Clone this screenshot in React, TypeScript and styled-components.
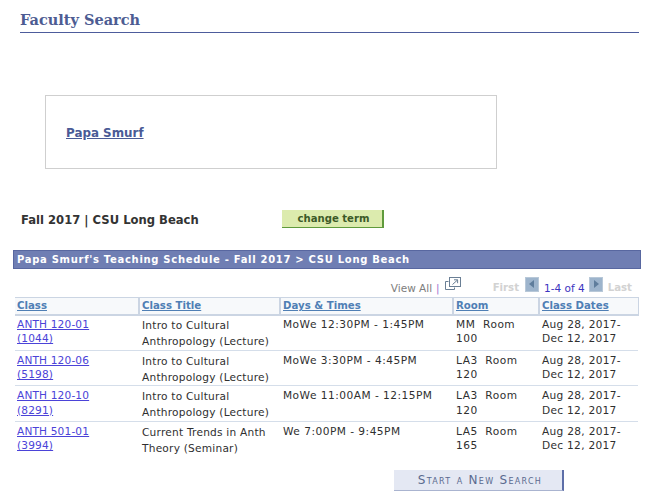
import React from "react";
import styled, { createGlobalStyle } from "styled-components";

const GlobalStyle = createGlobalStyle`
  html, body {
    margin: 0;
    padding: 0;
    background: #fff;
  }
  body {
    font-family: "DejaVu Sans", Verdana, sans-serif;
    font-size: 11px;
    color: #2f2f2f;
  }
`;

const Page = styled.div`
  width: 659px;
  height: 496px;
  overflow: hidden;
  padding-top: 12px;
  box-sizing: border-box;
`;

const Title = styled.h1`
  margin: 0 20px 0 20px;
  height: 20px;
  border-bottom: 1px solid #4d5c9c;
  font: bold 14.5px/15px "DejaVu Serif", "Liberation Serif", serif;
  color: #4d5c92;
`;

const NameBox = styled.div`
  margin: 62px 0 0 45px;
  width: 452px;
  height: 74px;
  box-sizing: border-box;
  border: 1px solid #cfcfcf;
  display: flex;
  align-items: center;
  padding: 1px 0 0 20px;
`;

const NameLink = styled.a`
  font-size: 11.9px;
  font-weight: bold;
  color: #4a5a96;
  text-decoration: underline;
`;

const TermRow = styled.div`
  margin: 41px 0 0 21px;
  height: 18px;
  display: flex;
  align-items: center;
`;

const TermLabel = styled.div`
  width: 261px;
  padding-top: 2px;
  font-size: 11.6px;
  font-weight: bold;
  color: #333;
`;

const TermButton = styled.button`
  width: 102px;
  height: 18px;
  padding: 0 0 0 3px;
  background: #dcebae;
  border: 0;
  border-right: 2px solid #5f9a3c;
  border-bottom: 1px solid #5f9a3c;
  font: bold 10.1px "DejaVu Sans", sans-serif;
  color: #3c5a28;
`;

const Banner = styled.div`
  margin: 22px 18px 0 13px;
  height: 19px;
  box-sizing: border-box;
  background: #6f7eb3;
  border: 1px solid #5867a0;
  padding-left: 3px;
  color: #fff;
  font-size: 10px;
  font-weight: bold;
  letter-spacing: 0.7px;
  line-height: 17px;
  white-space: nowrap;
`;

const NavRow = styled.div`
  margin: 6px 27px 0 0;
  height: 22px;
  display: flex;
  justify-content: flex-end;
  align-items: center;
  font-size: 10.5px;
`;

const NavText = styled.span<{ $faded?: boolean; $blue?: boolean }>`
  color: ${(p) => (p.$blue ? "#3a35c0" : p.$faded ? "#d2d2d2" : "#7d7d7d")};
  font-weight: ${(p) => (p.$faded ? "bold" : "normal")};
  font-size: ${(p) => (p.$faded ? "10.2px" : "10.5px")};
  margin-top: 3px;
`;

const Divider = styled.span`
  color: #a070d0;
  margin: 3px 5px 0 4px;
`;

const ArrowBox = styled.span<{ $left: number }>`
  width: 14px;
  height: 15px;
  background: #9db4cc;
  border: 1px solid #b8c8d8;
  box-sizing: border-box;
  display: flex;
  align-items: center;
  justify-content: center;
  margin: -4px 5px 0 ${(p) => p.$left}px;
`;

const PopupIcon = styled.svg`
  width: 16px;
  height: 14px;
  margin: -4px 32px 0 0;
`;

const Table = styled.table`
  margin-left: 15px;
  width: 623px;
  table-layout: fixed;
  border-collapse: collapse;
`;

const HeadCell = styled.th`
  height: 17px;
  padding: 0 0 0 2px;
  box-sizing: border-box;
  background: #f7f9fb;
  border-top: 1px solid #cbd5e3;
  border-bottom: 2px solid #cbd5e3;
  border-right: 2px solid #cbd5e3;
  text-align: left;
  font-size: 10.2px;
  font-weight: bold;
  &:last-child {
    border-right: 1px solid #cbd5e3;
  }
`;

const HeadLink = styled.a`
  color: #4f7fb5;
  text-decoration: underline;
`;

const Row = styled.tr`
  &:not(:last-child) td {
    border-bottom: 1px solid #d5deea;
  }
  &:not(:first-child) td {
    padding-top: 2px;
  }
`;

const Cell = styled.td<{ $spacing?: number }>`
  height: 35.6px;
  padding: 1px 2px 0 3px;
  box-sizing: border-box;
  vertical-align: top;
  font-size: 10.6px;
  line-height: 14.5px;
  color: #2f2f2f;
  letter-spacing: ${(p) => p.$spacing ?? 0.15}px;
`;

const ClassCell = styled(Cell)`
  padding-left: 2px;
`;

const TitleCell = styled(Cell)`
  line-height: 16px;
`;

const ClassLink = styled.a`
  color: #4b43d8;
  text-decoration: underline;
`;

const Footer = styled.div`
  margin: 13px 0 0 394px;
`;

const SearchButton = styled.button`
  width: 170px;
  height: 21px;
  padding: 0 0 0 4px;
  background: #e4e8f3;
  border: 0;
  border-right: 2px solid #5d6ea8;
  border-bottom: 1px solid #aab4d0;
  font: 12px "DejaVu Sans", sans-serif;
  font-variant: small-caps;
  letter-spacing: 1.3px;
  color: #5a6a8f;
`;

const rows = [
  { cls: "ANTH 120-01", num: "(1044)", title: "Intro to Cultural Anthropology (Lecture)", time: "MoWe 12:30PM - 1:45PM", room: "MM\u00a0 Room 100" },
  { cls: "ANTH 120-06", num: "(5198)", title: "Intro to Cultural Anthropology (Lecture)", time: "MoWe 3:30PM - 4:45PM", room: "LA3\u00a0 Room 120" },
  { cls: "ANTH 120-10", num: "(8291)", title: "Intro to Cultural Anthropology (Lecture)", time: "MoWe 11:00AM - 12:15PM", room: "LA3\u00a0 Room 120" },
  { cls: "ANTH 501-01", num: "(3994)", title: "Current Trends in Anth Theory (Seminar)", time: "We 7:00PM - 9:45PM", room: "LA5\u00a0 Room 165" },
];

const columns = [
  { label: "Class", width: 124 },
  { label: "Class Title", width: 141 },
  { label: "Days & Times", width: 173 },
  { label: "Room", width: 86 },
  { label: "Class Dates", width: 99 },
];

export default function App() {
  return (
    <Page>
      <GlobalStyle />
      <Title>Faculty Search</Title>
      <NameBox>
        <NameLink href="#">Papa Smurf</NameLink>
      </NameBox>
      <TermRow>
        <TermLabel>Fall 2017 | CSU Long Beach</TermLabel>
        <TermButton>change term</TermButton>
      </TermRow>
      <Banner>Papa Smurf's Teaching Schedule - Fall 2017 &gt; CSU Long Beach</Banner>
      <NavRow>
        <NavText>View All</NavText>
        <Divider>|</Divider>
        <PopupIcon viewBox="0 0 16 14" fill="none">
          <rect x="4.5" y="0.5" width="11" height="9" fill="#fff" stroke="#6a7f95" />
          <path d="M0.5 4.5h3M0.5 4.5v8h9v-2" stroke="#6a7f95" />
          <path d="M7.5 7.5l5-4.5M9 2.8h3.6v3.4" stroke="#6a7f95" />
        </PopupIcon>
        <NavText $faded>First</NavText>
        <ArrowBox $left={6}>
          <svg width="6" height="8" viewBox="0 0 6 8">
            <path d="M5 0v8L0 4z" fill="#5f7d9c" />
          </svg>
        </ArrowBox>
        <NavText $blue>1-4 of 4</NavText>
        <ArrowBox $left={4}>
          <svg width="6" height="8" viewBox="0 0 6 8">
            <path d="M1 0v8l5-4z" fill="#5f7d9c" />
          </svg>
        </ArrowBox>
        <NavText $faded>Last</NavText>
      </NavRow>
      <Table>
        <colgroup>
          {columns.map((c) => (
            <col key={c.label} width={c.width} />
          ))}
        </colgroup>
        <thead>
          <tr>
            {columns.map((c) => (
              <HeadCell key={c.label}>
                <HeadLink href="#">{c.label}</HeadLink>
              </HeadCell>
            ))}
          </tr>
        </thead>
        <tbody>
          {rows.map((r) => (
            <Row key={r.cls}>
              <ClassCell>
                <ClassLink href="#">
                  {r.cls}
                  <br />
                  {r.num}
                </ClassLink>
              </ClassCell>
              <TitleCell $spacing={0.22}>{r.title}</TitleCell>
              <Cell $spacing={0.48}>{r.time}</Cell>
              <Cell $spacing={0.5}>{r.room}</Cell>
              <Cell $spacing={0.3}>Aug 28, 2017- Dec 12, 2017</Cell>
            </Row>
          ))}
        </tbody>
      </Table>
      <Footer>
        <SearchButton>Start a New Search</SearchButton>
      </Footer>
    </Page>
  );
}
